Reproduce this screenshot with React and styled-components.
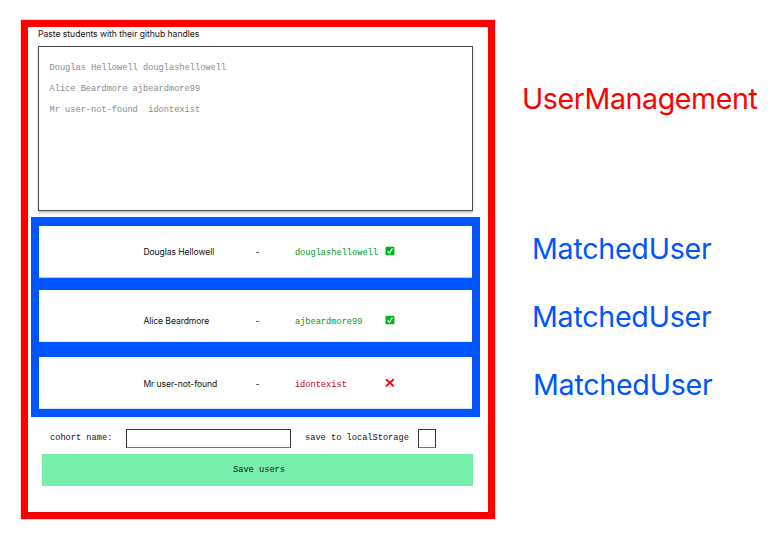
import React from "react";
import styled, { createGlobalStyle } from "styled-components";

const GlobalStyle = createGlobalStyle`
  *, *::before, *::after { box-sizing: border-box; }
  body { margin: 0; background: #fff; color: #111; overflow: hidden; font-family: Inter, sans-serif; }
`;

const mono = `font-family: "Liberation Mono", monospace; font-size: 8.67px; white-space: pre;`;

const Page = styled.div`
  display: flex;
  width: 779px;
  height: 541px;
  padding: 20px 0 0 21px;
`;

const Panel = styled.main`
  display: flex;
  flex-direction: column;
  flex: none;
  width: 474px;
  height: 499px;
  border: 7px solid #ff0000;
  box-shadow: 0 0 0 0.5px #ffb0b0;
`;

const Heading = styled.label`
  height: 14px;
  margin: 0 0 4.5px 10px;
  font-size: 8.6px;
  letter-spacing: -0.03px;
  line-height: 14px;
`;

const Paste = styled.div`
  height: 165px;
  margin: 0 15px 0 9.5px;
  padding: 11px;
  border: 1px solid #4c4c4c;
  box-shadow: 0 2px 2px rgba(0, 0, 0, 0.25);
`;

const PasteLine = styled.div`
  ${mono}
  height: 21px;
  line-height: 21px;
  color: #8a8a8a;
`;

const Matches = styled.section`
  display: flex;
  flex-direction: column;
  height: 200px;
  margin: 6.5px 8px 0 3px;
  padding: 9px 8px 8px;
  background: #0055ff;
`;

const Match = styled.div`
  display: grid;
  grid-template-columns: 112px 39.5px 90px 20px;
  align-items: center;
  height: 52px;
  margin-top: ${(p) => p.$gap}px;
  padding: ${(p) => p.$drop}px 0 0 104.4px;
  background: #fff;
  border-bottom: 1px solid ${(p) => p.$edge};
`;

const Name = styled.span`
  font-size: 8.6px;
  letter-spacing: -0.08px;
  line-height: 14px;
  white-space: nowrap;
`;

const Handle = styled.span`
  ${mono}
  line-height: 14px;
  padding-top: 2px;
  color: ${(p) => (p.$found ? "#009a1a" : "#c00010")};
`;

const StatusIcon = styled.svg`
  width: 10px;
  height: 10px;
  margin-bottom: 2px;
`;

const Options = styled.div`
  display: flex;
  align-items: center;
  height: 19px;
  margin: 12px 0 0 22px;
`;

const OptionText = styled.label`
  ${mono}
  width: ${(p) => p.$width}px;
  line-height: 16px;
  margin-top: -1px;
`;

const Box = styled.div`
  width: ${(p) => p.$width}px;
  height: 19px;
  margin-right: 14px;
  border: 1px solid #333;
  border-bottom-color: #777;
`;

const Save = styled.button`
  ${mono}
  height: 32px;
  margin: 6px 15px 0 14px;
  padding: 0 0 0 3px;
  border: 0;
  background: #78eeac;
  color: #111;
`;

const Labels = styled.aside`
  display: flex;
  flex-direction: column;
  flex: none;
  padding-top: 61px;
`;

const Label = styled.div`
  height: 36px;
  margin: ${(p) => p.$top}px 0 0 ${(p) => p.$left}px;
  font-size: 28.6px;
  letter-spacing: ${(p) => p.$spacing}px;
  line-height: 36px;
  color: ${(p) => p.$color};
  white-space: nowrap;
`;

function Status({ found }) {
  return found ? (
    <StatusIcon viewBox="0 0 10 10">
      <rect x="0.5" y="0.7" width="8.9" height="8.6" rx="1" fill="#00b51b" />
      <path d="M2.6 5.2 4.4 7.3 7.4 2.4" fill="none" stroke="#fff" strokeWidth="1.2" />
    </StatusIcon>
  ) : (
    <StatusIcon viewBox="0 0 10 10">
      <path d="M1 1.2 8.8 8.4M8.8 1.2 1 8.4" fill="none" stroke="#f00008" strokeWidth="1.9" />
    </StatusIcon>
  );
}

const students = [
  "Douglas Hellowell douglashellowell",
  "Alice Beardmore ajbeardmore99",
  "Mr user-not-found  idontexist",
];

const users = [
  { name: "Douglas Hellowell", handle: "douglashellowell", found: true, gap: 0, drop: 1, edge: "#c4c8c8" },
  { name: "Alice Beardmore", handle: "ajbeardmore99", found: true, gap: 12, drop: 11, edge: "#e6ecf6" },
  { name: "Mr user-not-found", handle: "idontexist", found: false, gap: 15, drop: 2, edge: "#d6e2f5" },
];

export default function App() {
  return (
    <Page>
      <GlobalStyle />
      <Panel>
        <Heading>Paste students with their github handles</Heading>
        <Paste>
          {students.map((s) => <PasteLine key={s}>{s}</PasteLine>)}
        </Paste>
        <Matches>
          {users.map((u) => (
            <Match key={u.handle} $gap={u.gap} $drop={u.drop} $edge={u.edge}>
              <Name>{u.name}</Name>
              <Name>-</Name>
              <Handle $found={u.found}>{u.handle}</Handle>
              <Status found={u.found} />
            </Match>
          ))}
        </Matches>
        <Options>
          <OptionText $width={76}>cohort name:</OptionText>
          <Box $width={165} />
          <OptionText $width={113}>save to localStorage</OptionText>
          <Box $width={18} />
        </Options>
        <Save>Save users</Save>
      </Panel>
      <Labels>
        <Label $top={0} $left={27} $spacing={-0.42} $color="#ff0000">UserManagement</Label>
        <Label $top={114} $left={37} $spacing={-0.25} $color="#0055ff">MatchedUser</Label>
        <Label $top={32} $left={37} $spacing={-0.25} $color="#0055ff">MatchedUser</Label>
        <Label $top={32} $left={38} $spacing={-0.25} $color="#0055ff">MatchedUser</Label>
      </Labels>
    </Page>
  );
}
